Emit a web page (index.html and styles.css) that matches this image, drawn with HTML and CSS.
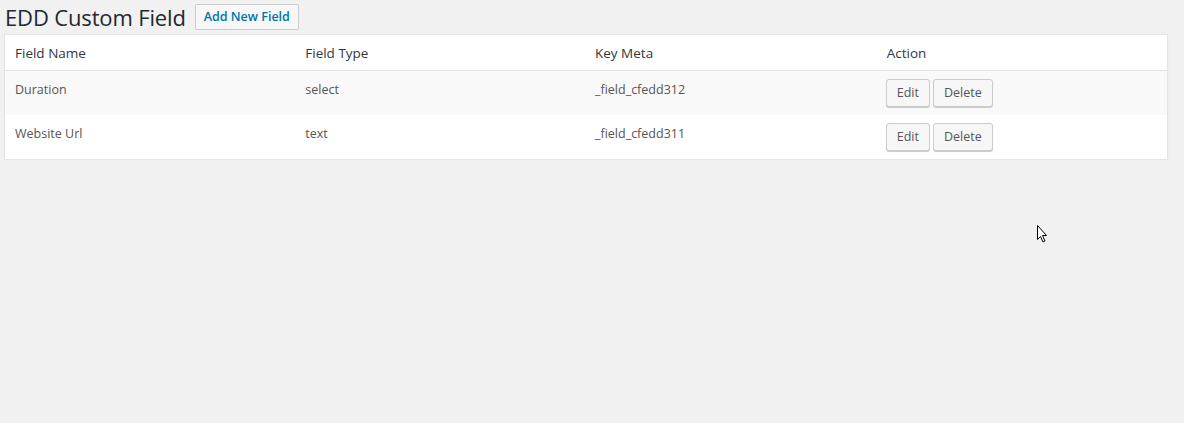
FILE: index.html
```html
<!DOCTYPE html>
<html>
<head>
<meta charset="utf-8">
<link rel="stylesheet" href="styles.css">
</head>
<body>
<div class="wrap">
  <div class="heading">
    <h1 class="title">EDD Custom Field</h1>
    <a class="add-btn" href="#">Add New Field</a>
  </div>
  <table class="fields">
    <thead>
      <tr><th>Field Name</th><th>Field Type</th><th>Key Meta</th><th>Action</th></tr>
    </thead>
    <tbody>
      <tr class="alt">
        <td>Duration</td><td>select</td><td>_field_cfedd312</td>
        <td class="act"><span class="actions"><button class="btn">Edit</button><button class="btn">Delete</button></span></td>
      </tr>
      <tr>
        <td>Website Url</td><td>text</td><td>_field_cfedd311</td>
        <td class="act"><span class="actions"><button class="btn">Edit</button><button class="btn">Delete</button></span></td>
      </tr>
    </tbody>
  </table>
</div>
<svg class="cursor" width="13" height="20" viewBox="0 0 13 20"><path d="M1.5 1.5 L1.5 15.5 L4.5 12.5 L7 18 L9 17 L6.5 11.5 L10.5 11.5 Z" fill="#fff" stroke="#000" stroke-width="1" stroke-linejoin="miter"/></svg>
</body>
</html>
```
FILE: styles.css
```css
html, body {
  margin: 0;
  padding: 0;
  background: #f1f1f1;
  font-family: "Open Sans", "Noto Sans", sans-serif;
  color: #444;
}
.wrap {
  padding: 0 16px 0 4px;
}
.heading {
  display: flex;
  align-items: center;
  gap: 9px;
  height: 34px;
  padding-left: 1px;
}
.title {
  margin: 0;
  font-size: 22px;
  font-weight: 400;
  color: #23282d;
  line-height: 34px;
  letter-spacing: -0.15px;
}
.add-btn {
  display: inline-block;
  box-sizing: border-box;
  height: 26px;
  line-height: 24px;
  padding: 0 8px;
  border: 1px solid #ccc;
  border-radius: 2px;
  background: #f7f7f7;
  color: #0073aa;
  font-size: 12.5px;
  font-weight: 600;
  text-decoration: none;
  margin-top: -1px;
}
.fields {
  width: 1164px;
  border-collapse: collapse;
  border-spacing: 0;
  table-layout: fixed;
  background: #fff;
  border: 1px solid #e5e5e5;
  box-shadow: 0 1px 1px rgba(0,0,0,.06);
}
.fields th {
  text-align: left;
  font-weight: 400;
  font-size: 13.5px;
  color: #32373c;
  padding: 9px 10px 7px 10px;
  line-height: 19px;
  border-bottom: 1px solid #e1e1e1;
}
.fields th:nth-child(3), .fields td:nth-child(3) {
  padding-left: 9px;
}
.fields td {
  font-size: 12.5px;
  color: #555;
  padding: 9px 10px 7px 10px;
  line-height: 20px;
  vertical-align: top;
  height: 28px;
}
.fields td.act {
  padding: 8px 10px 8px 9px;
}
.fields tr.alt td {
  background: #f9f9f9;
}
.actions {
  display: flex;
  gap: 3px;
}
.btn {
  box-sizing: border-box;
  height: 28px;
  padding: 0 10px;
  border: 1px solid #ccc;
  border-radius: 3px;
  background: #f7f7f7;
  box-shadow: 0 1px 0 #ccc;
  color: #555;
  font-family: "Open Sans", "Noto Sans", sans-serif;
  font-size: 12.5px;
  line-height: 26px;
  cursor: pointer;
}
.cursor {
  position: absolute;
  left: 1036px;
  top: 224px;
}
```
